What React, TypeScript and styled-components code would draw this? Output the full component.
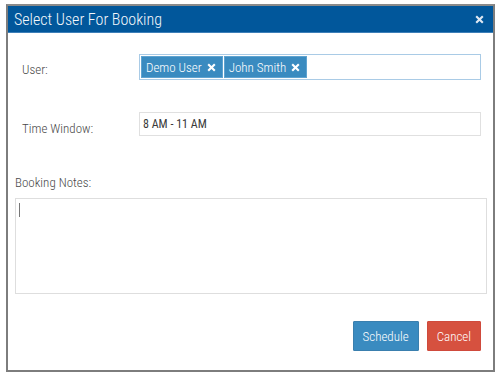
import React from "react";
import styled, { createGlobalStyle } from "styled-components";

const Global = createGlobalStyle`
  html, body { margin: 0; padding: 0; background: #fff; }
  body { font-family: Roboto, "Liberation Sans", sans-serif; font-stretch: 80%; }
  * { box-sizing: border-box; }
`;

const Page = styled.div`
  padding: 4px 5px 0 6px;
`;

const Dialog = styled.div`
  width: 489px;
  height: 368px;
  border: 2px solid #7d7d7d;
  border-top-color: #8a8a8a;
  background: #fff;
  display: flex;
  flex-direction: column;
`;

const Header = styled.div`
  height: 27px;
  background: #01579b;
  border-bottom: 1px solid #3d7fb8;
  display: flex;
  align-items: center;
  justify-content: space-between;
  padding: 0 9px 0 6px;
  color: #fff;
`;

const Title = styled.span`
  font-size: 16px;
  font-weight: 300;
  color: #f4f8fc;
`;

const Body = styled.div`
  flex: 1;
  display: flex;
  flex-direction: column;
  padding: 21px 6px 0 7px;
`;

const FieldRow = styled.div<{ $mt?: number }>`
  display: grid;
  grid-template-columns: 117px 1fr;
  align-items: center;
  padding: 0 6px 0 7px;
  margin-top: ${(p) => p.$mt ?? 0}px;
`;

const Label = styled.label<{ $offset?: number }>`
  font-size: 13px;
  font-weight: 300;
  color: #4a4a4a;
  margin-top: ${(p) => p.$offset ?? 0}px;
`;

const TagBox = styled.div`
  height: 26px;
  border: 1px solid #a9cbe6;
  padding: 1px;
  display: flex;
  gap: 1px;
`;

const Tag = styled.span`
  background: #3a8bc0;
  border: 1px solid #5fa3d0;
  color: #fff;
  font-size: 13px;
  font-weight: 300;
  display: flex;
  align-items: center;
  gap: 5px;
  padding: 0 6px 0 4px;
`;

const TextInput = styled.div`
  height: 24px;
  border: 1px solid #e0e0e0;
  font-size: 12px;
  font-weight: 400;
  color: #3a3a3a;
  display: flex;
  align-items: center;
  padding-left: 3px;
`;

const NotesLabel = styled.div`
  font-size: 13px;
  font-weight: 300;
  color: #4a4a4a;
  margin-top: 39px;
  height: 20px;
`;

const NotesArea = styled.div`
  height: 96px;
  border: 1px solid #dedede;
  margin-top: 3px;
  padding: 4px 3px;
`;

const Caret = styled.div`
  width: 1px;
  height: 14px;
  background: #777;
`;

const Footer = styled.div`
  display: flex;
  justify-content: flex-end;
  gap: 8px;
  margin-top: 27px;
  padding-right: 6px;
`;

const Button = styled.button<{ $variant: "primary" | "danger" }>`
  height: 30px;
  border: 1px solid ${(p) => (p.$variant === "primary" ? "#3a7fae" : "#cf4a3c")};
  background: ${(p) => (p.$variant === "primary" ? "#3a8bc0" : "#d6513f")};
  color: #fff;
  font-family: Roboto, "Liberation Sans", sans-serif;
  font-stretch: 80%;
  font-size: 13px;
  font-weight: 300;
  padding: 0 9px;
  border-radius: 1px;
`;

const X = ({ size = 9, color = "#fff" }: { size?: number; color?: string }) => (
  <svg width={size} height={size} viewBox="0 0 9 9">
    <path d="M1.2 1.2 L7.8 7.8 M7.8 1.2 L1.2 7.8" stroke={color} strokeWidth="2.1" />
  </svg>
);

export default function App() {
  return (
    <Page>
      <Global />
      <Dialog>
        <Header>
          <Title>Select User For Booking</Title>
          <X size={9} color="#dfe8f2" />
        </Header>
        <Body>
          <FieldRow>
            <Label $offset={4}>User:</Label>
            <TagBox>
              <Tag>Demo User <X /></Tag>
              <Tag>John Smith <X /></Tag>
            </TagBox>
          </FieldRow>
          <FieldRow $mt={32}>
            <Label $offset={8}>Time Window:</Label>
            <TextInput>8 AM - 11 AM</TextInput>
          </FieldRow>
          <NotesLabel>Booking Notes:</NotesLabel>
          <NotesArea>
            <Caret />
          </NotesArea>
          <Footer>
            <Button $variant="primary">Schedule</Button>
            <Button $variant="danger">Cancel</Button>
          </Footer>
        </Body>
      </Dialog>
    </Page>
  );
}
